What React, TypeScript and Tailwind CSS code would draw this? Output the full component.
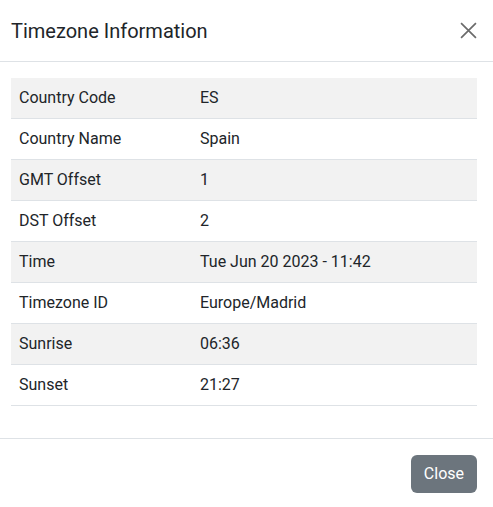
import React from "react";

const rows: [string, string][] = [
  ["Country Code", "ES"],
  ["Country Name", "Spain"],
  ["GMT Offset", "1"],
  ["DST Offset", "2"],
  ["Time", "Tue Jun 20 2023 - 11:42"],
  ["Timezone ID", "Europe/Madrid"],
  ["Sunrise", "06:36"],
  ["Sunset", "21:27"],
];

export default function App() {
  return (
    <div
      className="w-[493px] h-[507px] bg-white text-[#212529] flex flex-col"
      style={{ fontFamily: "Roboto, 'Liberation Sans', sans-serif" }}
    >
      <div className="h-[62px] shrink-0 border-b border-[#dee2e6] flex items-center justify-between pl-[11px] pr-[16px]">
        <div className="text-[20px] leading-[24px] pt-[1px]">Timezone Information</div>
        <svg width="17" height="17" viewBox="0 0 16 16">
          <path d="M1 1L15 15M15 1L1 15" stroke="#6b6b6b" strokeWidth="1.6" fill="none" />
        </svg>
      </div>
      <div className="pl-[11px] pr-[16px] pt-[16px] pb-[32px]">
        <div className="flex flex-col text-[16px] leading-[24px]">
          {rows.map(([k, v], i) => (
            <div
              key={k}
              className={
                "flex h-[41px] border-b border-[#dee2e6] " +
                (i % 2 === 0 ? "bg-[#f2f2f2]" : "bg-white")
              }
            >
              <div className="w-[181px] px-[8px] py-[8px]">{k}</div>
              <div className="px-[8px] py-[8px]">{v}</div>
            </div>
          ))}
        </div>
      </div>
      <div className="border-t border-[#dee2e6] flex justify-end pr-[16px] pt-[16px]">
        <button className="h-[38px] px-[13px] rounded-[6px] bg-[#6c757d] text-white text-[16px] leading-[24px]">
          Close
        </button>
      </div>
    </div>
  );
}
